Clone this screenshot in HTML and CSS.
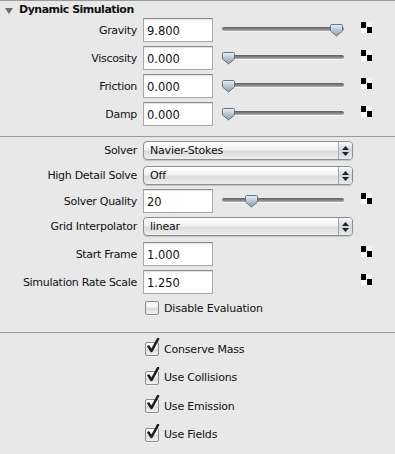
FILE: index.html
```html
<!DOCTYPE html>
<html lang="en">
<head>
  <meta charset="UTF-8" />
  <title>Dynamic Simulation</title>
  <link rel="stylesheet" href="styles.css">
</head>
<body>

  <svg class="defs" width="0" height="0">
    <defs>
      <linearGradient id="thumbFill" x1="0" y1="0" x2="0" y2="1">
        <stop offset="0" stop-color="#e9eef4" />
        <stop offset="0.5" stop-color="#b9c4d0" />
        <stop offset="1" stop-color="#8d9bab" />
      </linearGradient>
    </defs>
  </svg>

  <div class="panel">
    <div class="panel-header"><span class="disclosure"></span>Dynamic Simulation</div>

    <div class="section section-forces">
      <div class="row">
        <label class="row-label">Gravity</label>
        <input class="field" value="9.800">
        <div class="slider">
          <svg class="thumb" style="left: 108px" width="13" height="13" viewBox="0 0 13 13"><path d="M1.5 0.5h10a1 1 0 0 1 1 1v5.5l-6 5l-6-5v-5.5a1 1 0 0 1 1-1z" fill="url(#thumbFill)" stroke="#66768a" /></svg>
        </div>
        <span class="key"></span>
      </div>
      <div class="row">
        <label class="row-label">Viscosity</label>
        <input class="field" value="0.000">
        <div class="slider">
          <svg class="thumb" style="left: 0px" width="13" height="13" viewBox="0 0 13 13"><path d="M1.5 0.5h10a1 1 0 0 1 1 1v5.5l-6 5l-6-5v-5.5a1 1 0 0 1 1-1z" fill="url(#thumbFill)" stroke="#66768a" /></svg>
        </div>
        <span class="key"></span>
      </div>
      <div class="row">
        <label class="row-label">Friction</label>
        <input class="field" value="0.000">
        <div class="slider">
          <svg class="thumb" style="left: 0px" width="13" height="13" viewBox="0 0 13 13"><path d="M1.5 0.5h10a1 1 0 0 1 1 1v5.5l-6 5l-6-5v-5.5a1 1 0 0 1 1-1z" fill="url(#thumbFill)" stroke="#66768a" /></svg>
        </div>
        <span class="key"></span>
      </div>
      <div class="row">
        <label class="row-label">Damp</label>
        <input class="field" value="0.000">
        <div class="slider">
          <svg class="thumb" style="left: 0px" width="13" height="13" viewBox="0 0 13 13"><path d="M1.5 0.5h10a1 1 0 0 1 1 1v5.5l-6 5l-6-5v-5.5a1 1 0 0 1 1-1z" fill="url(#thumbFill)" stroke="#66768a" /></svg>
        </div>
        <span class="key"></span>
      </div>
    </div>

    <div class="section section-solver">
      <div class="row row-popup">
        <label class="row-label">Solver</label>
        <div class="popup"><span class="popup-text">Navier-Stokes</span><span class="popup-arrows"><svg width="7" height="10" viewBox="0 0 7 10"><path d="M3.5 0L7 4H0z M3.5 10L7 6H0z" fill="#222" /></svg></span></div>
      </div>
      <div class="row row-popup">
        <label class="row-label">High Detail Solve</label>
        <div class="popup"><span class="popup-text">Off</span><span class="popup-arrows"><svg width="7" height="10" viewBox="0 0 7 10"><path d="M3.5 0L7 4H0z M3.5 10L7 6H0z" fill="#222" /></svg></span></div>
      </div>
      <div class="row">
        <label class="row-label">Solver Quality</label>
        <input class="field" value="20">
        <div class="slider">
          <svg class="thumb" style="left: 23px" width="13" height="13" viewBox="0 0 13 13"><path d="M1.5 0.5h10a1 1 0 0 1 1 1v5.5l-6 5l-6-5v-5.5a1 1 0 0 1 1-1z" fill="url(#thumbFill)" stroke="#66768a" /></svg>
        </div>
        <span class="key"></span>
      </div>
      <div class="row row-popup">
        <label class="row-label">Grid Interpolator</label>
        <div class="popup"><span class="popup-text">linear</span><span class="popup-arrows"><svg width="7" height="10" viewBox="0 0 7 10"><path d="M3.5 0L7 4H0z M3.5 10L7 6H0z" fill="#222" /></svg></span></div>
      </div>
      <div class="row row-start">
        <label class="row-label">Start Frame</label>
        <input class="field" value="1.000">
        <span class="spacer"></span>
        <span class="key"></span>
      </div>
      <div class="row">
        <label class="row-label">Simulation Rate Scale</label>
        <input class="field" value="1.250">
        <span class="spacer"></span>
        <span class="key"></span>
      </div>
      <div class="check-row check-disable">
        <span class="check"></span>Disable Evaluation
      </div>
    </div>

    <div class="section section-options">
      <div class="check-row">
        <span class="check checked"><svg width="15" height="16" viewBox="0 0 15 16"><path d="M3.5 8.5l3 4.5l6.5-12" fill="none" stroke="#1e1e1e" stroke-width="2.6" stroke-linecap="round" stroke-linejoin="round" /></svg></span>Conserve Mass
      </div>
      <div class="check-row">
        <span class="check checked"><svg width="15" height="16" viewBox="0 0 15 16"><path d="M3.5 8.5l3 4.5l6.5-12" fill="none" stroke="#1e1e1e" stroke-width="2.6" stroke-linecap="round" stroke-linejoin="round" /></svg></span>Use Collisions
      </div>
      <div class="check-row">
        <span class="check checked"><svg width="15" height="16" viewBox="0 0 15 16"><path d="M3.5 8.5l3 4.5l6.5-12" fill="none" stroke="#1e1e1e" stroke-width="2.6" stroke-linecap="round" stroke-linejoin="round" /></svg></span>Use Emission
      </div>
      <div class="check-row">
        <span class="check checked"><svg width="15" height="16" viewBox="0 0 15 16"><path d="M3.5 8.5l3 4.5l6.5-12" fill="none" stroke="#1e1e1e" stroke-width="2.6" stroke-linecap="round" stroke-linejoin="round" /></svg></span>Use Fields
      </div>
    </div>
  </div>

</body>
</html>
```

FILE: styles.css
```css
body {
  margin: 0;
  background-color: #e8e8e8;
  font-family: 'DejaVu Sans', sans-serif;
  font-size: 11px;
  color: #111;
}

.defs {
  position: absolute;
}

.panel {
  border-top: 1px solid #9a9a9a;
  height: 453px;
}

.panel-header {
  display: flex;
  align-items: center;
  height: 17px;
  padding-left: 5px;
  font-weight: bold;
  letter-spacing: -0.5px;
}

.disclosure {
  width: 0;
  height: 0;
  border-left: 4px solid transparent;
  border-right: 4px solid transparent;
  border-top: 6px solid #6c6c6c;
  margin: 2px 6px 0 0;
}

.section {
  display: flex;
  flex-direction: column;
  border-bottom: 1px solid #9a9a9a;
}

.section-forces {
  gap: 4px;
  padding-bottom: 10px;
}

.section-solver {
  padding-top: 4px;
  padding-bottom: 17px;
}

.section-options {
  border-bottom: none;
  padding-top: 9px;
  gap: 14.6px;
}

.row {
  display: flex;
  align-items: center;
  height: 24px;
}

.row-label {
  width: 137px;
  margin-right: 6px;
  text-align: right;
  letter-spacing: -0.3px;
}

.field {
  box-sizing: border-box;
  width: 70px;
  height: 24px;
  margin: 0;
  padding: 2px 3px 0;
  border: 1px solid #a8a8a8;
  border-top-color: #8c8c8c;
  box-shadow: inset 0 1px 1px rgba(0, 0, 0, 0.12);
  background: #fff;
  font-family: 'DejaVu Sans', sans-serif;
  font-size: 11.5px;
  color: #111;
  outline: none;
}

.slider {
  position: relative;
  width: 122px;
  height: 4px;
  margin-left: 9px;
  margin-top: -3px;
  border-radius: 2px;
  background: linear-gradient(#5e5e5e, #8a8a8a 60%, #b4b4b4);
  box-shadow: 0 1px 0 rgba(255, 255, 255, 0.6);
}

.thumb {
  position: absolute;
  top: -3px;
}

.spacer {
  width: 131px;
}

.key {
  width: 11px;
  height: 11px;
  margin-left: 17px;
  margin-top: -6px;
  background: conic-gradient(#f4f4f4 0 25%, #000 0 50%, #fff 0 75%, #000 0);
}

.row-popup {
  height: 19px;
  margin-bottom: 6px;
}

.row-popup + .row {
  margin-bottom: 4px;
}

.row-start {
  margin-bottom: 4px;
}

.popup {
  box-sizing: border-box;
  display: flex;
  align-items: center;
  width: 210px;
  height: 19px;
  border: 1px solid #8d8d8d;
  border-radius: 4px;
  background: linear-gradient(#ffffff, #f0f0f0 45%, #dcdcdc 55%, #eeeeee);
  box-shadow: 0 1px 1px rgba(0, 0, 0, 0.15);
}

.popup-text {
  flex: 1;
  padding-left: 6px;
  letter-spacing: -0.2px;
}

.popup-arrows {
  display: flex;
  align-items: center;
  justify-content: center;
  width: 13px;
  height: 100%;
  border-left: 1px solid #a8a8a8;
  background: linear-gradient(#f6f8fb, #cfd6df 50%, #e6ebf1);
  border-radius: 0 3px 3px 0;
}

.check-row {
  display: flex;
  align-items: center;
  height: 14px;
  padding-left: 145px;
  letter-spacing: -0.2px;
}

.check-disable {
  margin-top: 7px;
}

.check {
  position: relative;
  box-sizing: border-box;
  width: 14px;
  height: 14px;
  margin-right: 5px;
  border: 1px solid #8a8a8a;
  border-radius: 2px;
  background: linear-gradient(#ffffff, #ececec 50%, #dadada 55%, #f2f2f2);
  box-shadow: 0 1px 0 rgba(255, 255, 255, 0.5);
}

.check svg {
  position: absolute;
  left: -1px;
  top: -5px;
}
```
